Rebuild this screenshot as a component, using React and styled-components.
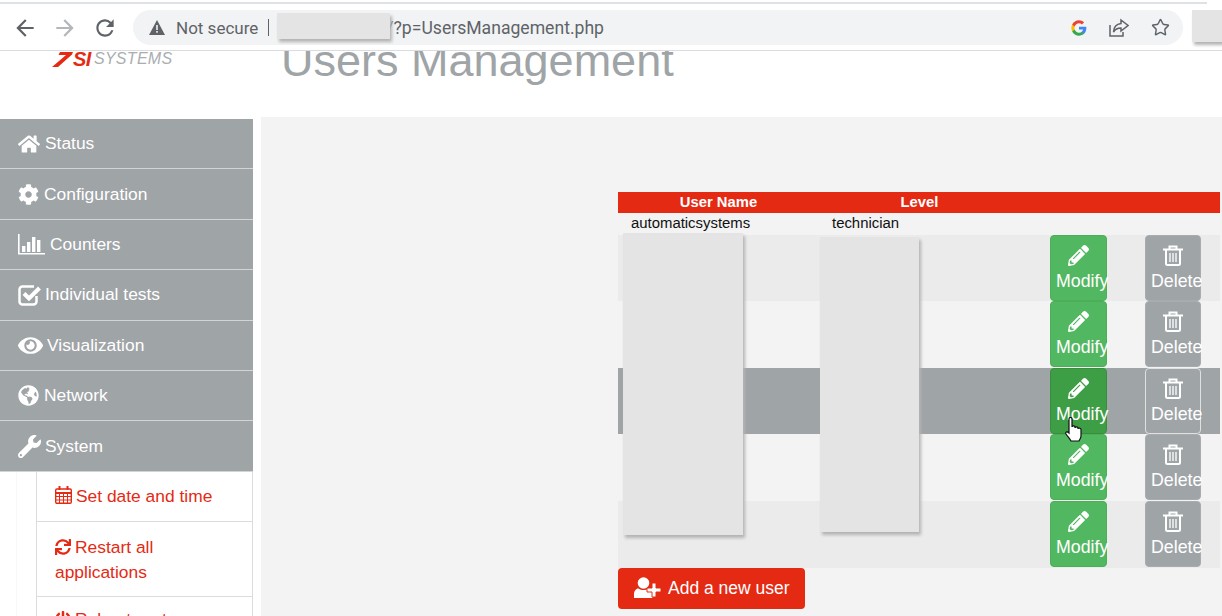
import React from 'react';
import styled, { createGlobalStyle } from 'styled-components';
import { Star } from 'lucide-react';
import {
  FaHome, FaCog, FaEye, FaGlobeAmericas, FaWrench,
  FaSync, FaPencilAlt, FaPowerOff,
} from 'react-icons/fa';

const RED = '#e52a14';
const GREY = '#9fa4a7';

const GlobalStyle = createGlobalStyle`
  html, body { margin: 0; padding: 0; background: #fff; overflow: hidden; }
  body { font-family: "Liberation Sans", Arial, sans-serif; }
`;

const Page = styled.div`
  position: relative;
  width: 1222px;
  height: 616px;
  overflow: hidden;
  background: #fff;
`;

/* browser chrome */
const Browser = styled.div`
  position: relative;
  z-index: 2;
  height: 51px;
  box-sizing: border-box;
  padding: 10px 0 5px 12px;
  display: flex;
  align-items: flex-start;
  background: #fff;
  border-bottom: 1px solid #dadce0;
`;

const TopLine = styled.div`
  position: absolute;
  top: 2px;
  left: 0;
  width: 1207px;
  height: 2px;
  background: #dee1e6;
`;

const NavButton = styled.div`
  width: 26px;
  height: 35px;
  margin-right: 14px;
  display: flex;
  align-items: center;
  justify-content: center;
  color: ${p => (p.$off ? '#b4b7ba' : '#5f6368')};
`;

const Address = styled.div`
  width: 1050px;
  height: 35px;
  margin-left: 1px;
  box-sizing: border-box;
  padding: 0 13px 0 16px;
  display: flex;
  align-items: center;
  border-radius: 18px;
  background: #f1f3f4;
  font-family: "Roboto", "Noto Sans", sans-serif;
  font-size: 17px;
  color: #5f6368;
`;

const Secure = styled.span`
  margin-left: 11px;
`;

const Divider = styled.span`
  width: 1px;
  height: 17px;
  margin: 0 4px 0 10px;
  background: #5f6368;
`;

const Url = styled.span`
  margin-left: 113px;
  font-size: 17.6px;
`;

const AddressIcons = styled.div`
  margin-left: auto;
  display: flex;
  align-items: center;
  gap: 22px;
`;

const Blur = styled.div`
  position: absolute;
  background: #e4e4e4;
  box-shadow: 2px 3px 3px #b4b4b4;
`;

const UrlBlur = styled(Blur)`
  left: 277px;
  top: 13px;
  width: 113px;
  height: 26px;
`;

const CornerBlur = styled(Blur)`
  left: 1192px;
  top: 10px;
  width: 30px;
  height: 32px;
`;

/* page header */
const Header = styled.header`
  height: 66px;
  display: flex;
  align-items: flex-start;
`;

const Logo = styled.div`
  width: 281px;
  box-sizing: border-box;
  padding-left: 52px;
  display: flex;
  align-items: center;
  height: 16px;
  font-style: italic;
`;

const LogoMark = styled.span`
  margin-left: 0;
  color: ${RED};
  font-weight: 700;
  font-size: 20px;
  letter-spacing: -.5px;
`;

const LogoWord = styled.span`
  margin-left: 3px;
  color: #a9adb0;
  font-size: 16px;
  letter-spacing: .3px;
`;

const Title = styled.h1`
  margin: -15px 0 0;
  font-weight: 400;
  font-size: 45px;
  line-height: 50px;
  color: ${GREY};
`;

/* main layout */
const Main = styled.div`
  display: flex;
  align-items: flex-start;
`;

const Sidebar = styled.nav`
  width: 253px;
  flex: none;
  margin-top: 2px;
`;

const MenuItem = styled.div`
  height: 50.4px;
  box-sizing: border-box;
  padding-left: 18px;
  display: flex;
  align-items: center;
  gap: ${p => p.$gap || 3}px;
  background: ${GREY};
  border-bottom: 1px solid #d2d4d6;
  color: #fff;
  font-size: 17.4px;
  svg { flex: none; }
`;

const SubMenu = styled.div`
  margin-left: 16px;
  padding-left: 19px;
  border-left: 1px solid #f8f8f8;
`;

const SubItem = styled.div`
  box-sizing: border-box;
  padding: ${p => (p.$last ? 10 : 13)}px 18px 11px 18px;
  background: #fff;
  border-left: 1px solid #dcdcdc;
  border-right: 1px solid #dcdcdc;
  border-bottom: 1px solid #dcdcdc;
  color: ${RED};
  font-size: 17.4px;
  line-height: 25px;
  svg { vertical-align: -2px; margin-right: 4px; }
  &:first-child { padding-top: 12px; padding-bottom: 12px; }
`;

const Content = styled.main`
  position: relative;
  flex: 1;
  height: 499px;
  margin-left: 8px;
  box-sizing: border-box;
  padding: 75px 2px 0 357px;
  background: #f3f3f3;
`;

const Table = styled.div`
  width: 602px;
`;

const Columns = styled.div`
  display: grid;
  grid-template-columns: 201px 201px 30px 1fr;
`;

const HeadRow = styled(Columns)`
  height: 21px;
  padding-bottom: 2px;
  box-sizing: border-box;
  align-items: center;
  background: ${RED};
  color: #fff;
  font-weight: 700;
  font-size: 14.8px;
  span { text-align: center; }
`;

const FirstRow = styled(Columns)`
  height: 21.6px;
  padding-bottom: 2px;
  box-sizing: border-box;
  align-items: center;
  font-size: 14.9px;
  color: #111;
  span { padding-left: 13px; }
`;

const Row = styled.div`
  height: 66.6px;
  display: flex;
  padding-left: 432px;
  background: ${p => (p.$hover ? GREY : p.$odd ? '#ebebeb' : '#f3f3f3')};
`;

const ActionButton = styled.div`
  box-sizing: border-box;
  height: 66px;
  padding: 9px 0 0 5px;
  border-radius: 4px;
  color: #fff;
  font-size: 17.8px;
  line-height: 22px;
  white-space: nowrap;
  svg { display: block; margin: 0 0 4px ${p => p.$iconLeft}px; }
`;

const ModifyButton = styled(ActionButton)`
  width: 57px;
  background: ${p => (p.$hover ? '#3e9e45' : '#52b761')};
  border: 1px solid ${p => (p.$hover ? '#388e3c' : '#4cae57')};
`;

const DeleteButton = styled(ActionButton)`
  width: 56px;
  margin-left: 38px;
  background: ${GREY};
  border: 1px solid ${p => (p.$hover ? '#e0e0e0' : '#a8acaf')};
`;

const AddButton = styled.div`
  width: 187px;
  height: 41px;
  box-sizing: border-box;
  padding-left: 16px;
  display: flex;
  align-items: center;
  gap: 7px;
  border-radius: 4px;
  background: ${RED};
  color: #fff;
  font-size: 17.5px;
`;

const NameBlur = styled(Blur)`
  left: 362px;
  top: 116px;
  width: 120px;
  height: 302px;
`;

const LevelBlur = styled(Blur)`
  left: 559px;
  top: 120px;
  width: 99px;
  height: 295px;
`;

const Cursor = styled.svg`
  position: absolute;
  left: 803px;
  top: 300px;
`;

/* icons that the packages draw too differently */
const BackIcon = () => (
  <svg width="26" height="26" viewBox="0 0 24 24" fill="currentColor">
    <path d="M20 11H7.830l5.590-5.590L12 4l-8 8 8 8 1.410-1.410L7.830 13H20v-2z" />
  </svg>
);

const ForwardIcon = () => (
  <svg width="26" height="26" viewBox="0 0 24 24" fill="currentColor">
    <path d="M4 11h12.170l-5.590-5.590L12 4l8 8-8 8-1.410-1.410L16.170 13H4v-2z" />
  </svg>
);

const ReloadIcon = () => (
  <svg width="26" height="26" viewBox="0 0 24 24" fill="currentColor">
    <path d="M17.650 6.350A7.958 7.958 0 0 0 12 4c-4.420 0-7.990 3.580-7.990 8s3.570 8 7.990 8c3.730 0 6.840-2.550 7.730-6h-2.080A5.990 5.990 0 0 1 12 18c-3.310 0-6-2.690-6-6s2.690-6 6-6c1.660 0 3.140.690 4.220 1.780L13 11h7V4l-2.350 2.350z" />
  </svg>
);

const BarsIcon = () => (
  <svg width="27" height="21" viewBox="0 0 27 21" fill="#fff">
    <path d="M0 0h1.600v19H27v1.600H0z" />
    <rect x="4" y="12" width="3.400" height="6" />
    <rect x="9" y="8" width="3.400" height="10" />
    <rect x="14" y="3" width="3.400" height="15" />
    <rect x="19" y="6" width="3.400" height="12" />
  </svg>
);

const CheckIcon = () => (
  <svg width="24" height="22" viewBox="0 0 24 22" fill="none" stroke="#fff">
    <path d="M18.500 12v5.500a3 3 0 0 1-3 3h-11a3 3 0 0 1-3-3v-12a3 3 0 0 1 3-3H16" strokeWidth="2.500" />
    <path d="M6 9.500l5 5L21.500 4" strokeWidth="4" />
  </svg>
);

const CalendarIcon = () => (
  <svg width="17" height="18" viewBox="0 0 17 18" fill="none" stroke={RED}>
    <rect x=".7" y="3" width="15.600" height="14.300" rx="1.200" strokeWidth="1.400" />
    <path d="M1 7h15" strokeWidth="2" />
    <path d="M1 10.500h15M1 14h15M4.500 7v10M8.500 7v10M12.500 7v10" strokeWidth="1" />
    <path d="M4.500 0v4M12.500 0v4" strokeWidth="2" />
  </svg>
);

const TrashIcon = () => (
  <svg width="20" height="21" viewBox="0 0 20 21" fill="none" stroke="#fff">
    <path d="M0 4.500h20" strokeWidth="2" />
    <path d="M6.500 4V1.500h7V4" strokeWidth="2" />
    <path d="M3 5v13.500a1.500 1.500 0 0 0 1.500 1.500h11a1.500 1.500 0 0 0 1.500-1.500V5" strokeWidth="2" />
    <path d="M7 8v9M10 8v9M13 8v9" strokeWidth="1.300" />
  </svg>
);

const AddUserIcon = () => (
  <svg width="27" height="22" viewBox="0 0 27 22" fill="#fff">
    <circle cx="9.500" cy="6" r="5.800" />
    <path d="M0 21v-4c0-3 2-5.500 4.500-5.500 3 2 7 2 10 0 2 0 3.500 1 4 3.500v6z" />
    <path d="M13 11h5V6h4v5h5v4h-5v5h-4v-5h-5z" stroke={RED} strokeWidth="1" />
  </svg>
);

const WarnIcon = () => (
  <svg width="16" height="15" viewBox="0 0 16 15">
    <path d="M8 0l8 15H0z" fill="#5f6368" />
    <rect x="7.200" y="5" width="1.600" height="5" fill="#f1f3f4" />
    <rect x="7.200" y="11" width="1.600" height="1.700" fill="#f1f3f4" />
  </svg>
);

const GoogleIcon = () => (
  <svg width="16" height="16" viewBox="0 0 48 48">
    <path fill="#4285F4" d="M46 24.500c0-1.600-.1-3.100-.4-4.500H24v8.700h12.400c-.5 2.800-2.100 5.200-4.500 6.800v5.700h7.300C43.400 36.800 46 31.200 46 24.500z" />
    <path fill="#34A853" d="M24 47c6.100 0 11.300-2 15.200-5.500l-7.300-5.700c-2 1.400-4.700 2.200-7.900 2.200-6 0-11.100-4.100-12.900-9.500H3.500v5.900C7.300 41.900 15 47 24 47z" />
    <path fill="#FBBC05" d="M11.100 28.500c-.5-1.400-.7-2.900-.7-4.500s.3-3.100.7-4.500v-5.900H3.500C2 16.700 1 20.200 1 24s.9 7.300 2.500 10.400z" />
    <path fill="#EA4335" d="M24 10c3.400 0 6.400 1.200 8.800 3.400l6.500-6.500C35.300 3.200 30.100 1 24 1 15 1 7.300 6.100 3.500 13.600l7.600 5.900C12.900 14.100 18 10 24 10z" />
  </svg>
);

const ShareIcon = () => (
  <svg width="20" height="19" viewBox="0 0 20 19" fill="none" stroke="#5f6368" strokeWidth="1.500">
    <path d="M1 7v11h13v-4" />
    <path d="M12 2l7 5.500-7 5.500V10C8 10 6 11.500 4.500 14c.3-5 3-8 7.500-8.500z" />
  </svg>
);

const rows = [
  { odd: true },
  {},
  { hover: true },
  {},
  { odd: true },
];

export default function App() {
  return (
    <Page>
      <GlobalStyle />
      <Browser>
        <TopLine />
        <NavButton><BackIcon /></NavButton>
        <NavButton $off><ForwardIcon /></NavButton>
        <NavButton><ReloadIcon /></NavButton>
        <Address>
          <WarnIcon />
          <Secure>Not secure</Secure>
          <Divider />
          <Url>/?p=UsersManagement.php</Url>
          <AddressIcons>
            <GoogleIcon />
            <ShareIcon />
            <Star size={19} strokeWidth={1.8} />
          </AddressIcons>
        </Address>
        <UrlBlur />
        <CornerBlur />
      </Browser>

      <Header>
        <Logo>
          <svg width="21" height="15" viewBox="0 0 21 15" fill={RED}>
            <path d="M8 0h13l-1 2.400L6 15H0L14 3H6.500z" />
          </svg>
          <LogoMark>SI</LogoMark>
          <LogoWord>SYSTEMS</LogoWord>
        </Logo>
        <Title>Users Management</Title>
      </Header>

      <Main>
        <Sidebar>
          <MenuItem $gap={5}><FaHome size={22} />Status</MenuItem>
          <MenuItem $gap={5}><FaCog size={21} />Configuration</MenuItem>
          <MenuItem $gap={5}><BarsIcon />Counters</MenuItem>
          <MenuItem $gap={3}><CheckIcon />Individual tests</MenuItem>
          <MenuItem $gap={4}><FaEye size={25} />Visualization</MenuItem>
          <MenuItem $gap={5}><FaGlobeAmericas size={21} />Network</MenuItem>
          <MenuItem $gap={4}><FaWrench size={23} />System</MenuItem>
          <SubMenu>
            <SubItem><CalendarIcon />Set date and time</SubItem>
            <SubItem><FaSync size={16} />Restart all applications</SubItem>
            <SubItem $last><FaPowerOff size={16} />Reboot system</SubItem>
          </SubMenu>
        </Sidebar>

        <Content>
          <Table>
            <HeadRow>
              <span>User Name</span>
              <span>Level</span>
            </HeadRow>
            <FirstRow>
              <span>automaticsystems</span>
              <span>technician</span>
            </FirstRow>
            {rows.map((row, i) => (
              <Row key={i} $odd={row.odd} $hover={row.hover}>
                <ModifyButton $hover={row.hover} $iconLeft={12}>
                  <FaPencilAlt size={21} />
                  Modify
                </ModifyButton>
                <DeleteButton $hover={row.hover} $iconLeft={12}>
                  <TrashIcon />
                  Delete
                </DeleteButton>
              </Row>
            ))}
            <AddButton>
              <AddUserIcon />
              Add a new user
            </AddButton>
          </Table>
          <NameBlur />
          <LevelBlur />
          <Cursor width="20" height="26" viewBox="0 0 20 26">
            <path
              d="M5 2c0-2 3-2 3 0v8c0-1.500 3-1.500 3 0v1c0-1.500 3-1.500 3 0v1c0-1.500 3-1 3 .5V19c0 2-1 3-2 5H7c-1-2-3-4-5-7-1-2 1-3 3-1z"
              fill="#fff"
              stroke="#111"
              strokeWidth="1.200"
            />
          </Cursor>
        </Content>
      </Main>
    </Page>
  );
}
